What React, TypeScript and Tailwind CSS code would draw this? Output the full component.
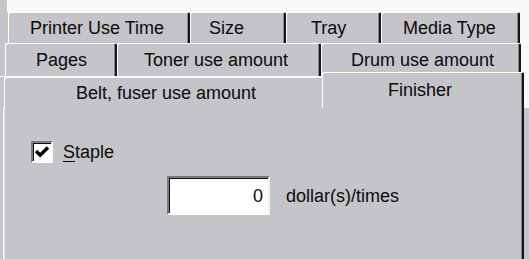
const GRAY = 'bg-[#c5c4c9]'

type TabDef = { label: string; w: string; pl: string }

const row1: TabDef[] = [
  { label: 'Printer Use Time', w: 'w-[182px]', pl: 'pl-[21px]' },
  { label: 'Size', w: 'w-[96px]', pl: 'pl-[18px]' },
  { label: 'Tray', w: 'w-[95px]', pl: 'pl-[24px]' },
  { label: 'Media Type', w: 'w-[139px]', pl: 'pl-[21px]' },
]

const row2: TabDef[] = [
  { label: 'Pages', w: 'w-[112px]', pl: 'pl-[30px]' },
  { label: 'Toner use amount', w: 'w-[204px]', pl: 'pl-[26px]' },
  { label: 'Drum use amount', w: 'w-[200px]', pl: 'pl-[29px]' },
]

function Tab({ tab, h }: { tab: TabDef; h: string }) {
  return (
    <div
      className={`${tab.w} ${h} ${tab.pl} ${GRAY} flex shrink-0 items-center rounded-tl-[3px] rounded-tr-[2px] border-t border-l border-white border-r-2 border-r-[#161616] shadow-[inset_-1px_0_0_#85848a] whitespace-nowrap`}
    >
      {tab.label}
    </div>
  )
}

export default function App() {
  return (
    <div
      className="relative h-[259px] w-[529px] overflow-hidden bg-[#fafafa] text-[18px] leading-none text-[#0a0a0a]"
      style={{ fontFamily: '"Liberation Sans", Arial, sans-serif' }}
    >
      {/* top band */}
      <div className="flex h-[12px]">
        <div className={`w-[7px] ${GRAY}`} />
      </div>

      {/* row 1 */}
      <div className="flex h-[31px]">
        <div className={`w-[8px] shrink-0 ${GRAY}`} />
        {row1.map((t) => (
          <Tab key={t.label} tab={t} h="h-[31px]" />
        ))}
      </div>

      {/* row 2 */}
      <div className="flex h-[33px]">
        <div className={`w-[5px] shrink-0 ${GRAY}`} />
        {row2.map((t) => (
          <Tab key={t.label} tab={t} h="h-[33px]" />
        ))}
      </div>

      {/* row 3 + selected tab */}
      <div className="relative z-10 -mt-[4px] flex h-[36px] items-end">
        <div className={`h-[31px] w-[4px] shrink-0 ${GRAY}`} />
        <div
          className={`flex h-[31px] w-[318px] shrink-0 items-center pl-[71px] ${GRAY} rounded-tl-[3px] border-t border-l border-white whitespace-nowrap`}
        >
          Belt, fuser use amount
        </div>
        <div
          className={`flex h-[36px] w-[202px] shrink-0 items-start pt-[8px] pl-[65px] ${GRAY} rounded-tl-[3px] rounded-tr-[2px] border-t border-l border-white border-r-2 border-r-[#161616] shadow-[inset_-1px_0_0_#85848a] whitespace-nowrap`}
        >
          Finisher
        </div>
      </div>

      {/* panel */}
      <div className={`flex h-[200px] ${GRAY}`}>
        <div className="w-[3px] shrink-0" />
        <div
          className={`-mt-px h-full w-[521px] shrink-0 border-t border-l border-white border-r-2 border-r-[#161616] shadow-[inset_1px_0_0_#e4e4e6,inset_-1px_0_0_#85848a] pt-[33px] pl-[27px]`}
        >
          <div className="flex items-center">
            <div className="flex h-[22px] w-[22px] items-center justify-center border-t-2 border-l-2 border-t-[#7b7a80] border-l-[#7b7a80] border-b-2 border-r-2 border-b-white border-r-white bg-white shadow-[inset_1px_1px_0_#111]">
              <svg viewBox="0 0 14 14" className="h-[16px] w-[16px]">
                <path d="M1.8 6.2 L5.4 9.8 L12.2 3" fill="none" stroke="#000" strokeWidth="3" />
              </svg>
            </div>
            <span className="ml-[10px]">
              <span className="underline decoration-1 underline-offset-[3px]">S</span>taple
            </span>
          </div>

          <div className="mt-[13px] ml-[136px] flex items-center">
            <div className="flex h-[39px] w-[103px] items-center justify-end border-t-2 border-l-2 border-t-[#7b7a80] border-l-[#7b7a80] border-b-2 border-r-2 border-b-white border-r-[#f4f4f4] bg-white pr-[5px] shadow-[inset_1px_1px_0_#111]">
              0
            </div>
            <span className="ml-[16px]">dollar(s)/times</span>
          </div>
        </div>
      </div>
    </div>
  )
}
